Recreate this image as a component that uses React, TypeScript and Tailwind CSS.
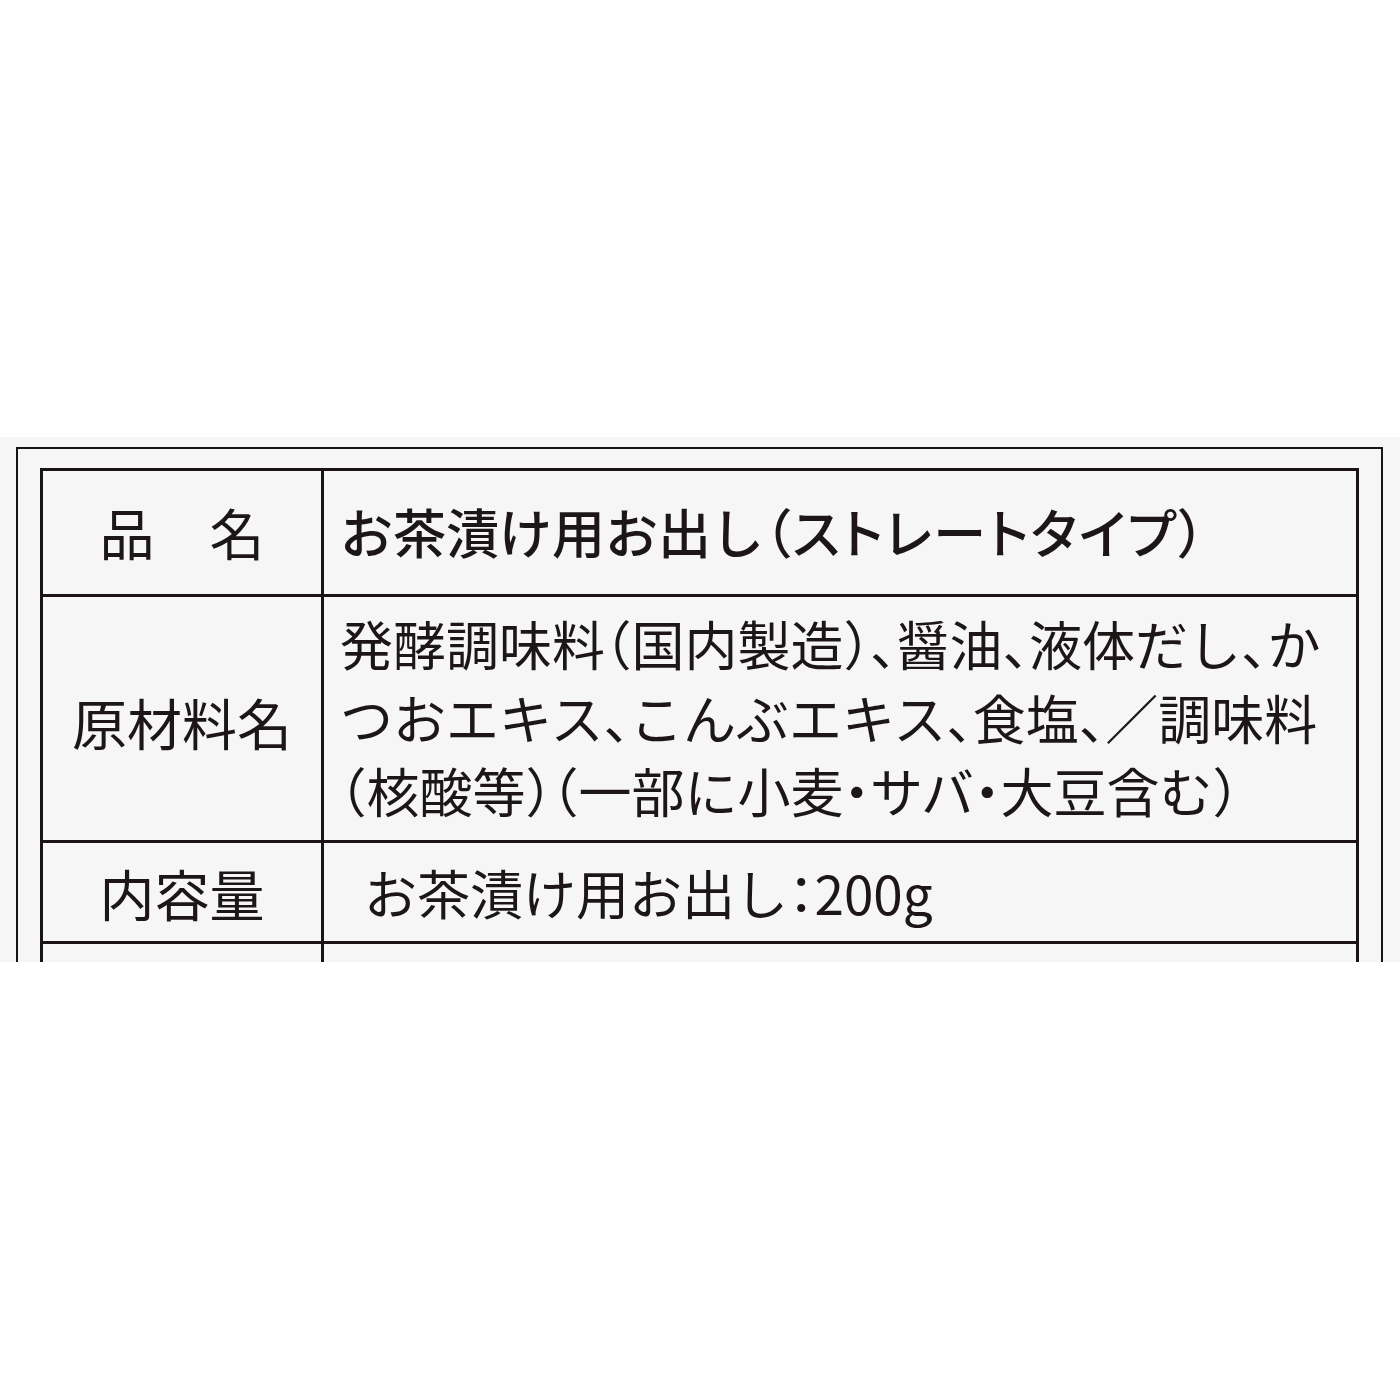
import React from "react";

const font = { fontFamily: '"Noto Sans CJK JP", "Noto Sans", sans-serif' };

export default function App() {
  return (
    <div className="w-[1400px] h-[1400px] bg-white overflow-hidden" style={font}>
      <div className="h-[437px] bg-white" />
      <div className="h-[525px] bg-[#f6f6f6] overflow-hidden">
        <div className="ml-[16px] mt-[10px] w-[1367px] h-[700px] border-2 border-[#1a1414] pt-[19px] px-[22px]">
          <div className="border-[3px] border-[#1a1414] text-[#1c1616]">
            {/* Row 1 */}
            <div className="grid grid-cols-[281px_1fr] border-b-[3px] border-[#1a1414] h-[126px]">
              <div className="border-r-[3px] border-[#1a1414] flex items-center justify-center text-[55px] leading-none pb-[2px]">
                品　名
              </div>
              <div className="flex items-center pl-[16px] text-[53px] leading-none font-medium whitespace-nowrap pb-[2px]">
                お茶漬け用お出し
                <span className="[font-feature-settings:'palt'] tracking-[2px]">（ストレートタイプ）</span>
              </div>
            </div>
            {/* Row 2 */}
            <div className="grid grid-cols-[281px_1fr] border-b-[3px] border-[#1a1414] h-[246px]">
              <div className="border-r-[3px] border-[#1a1414] flex items-center justify-center text-[55px] leading-none pt-[6px]">
                原材料名
              </div>
              <div className="flex flex-col justify-center pl-[16px] text-[53px] leading-[73.5px] whitespace-nowrap [font-feature-settings:'halt'] pb-[2px]">
                <div>発酵調味料（国内製造）、醤油、液体だし、か</div>
                <div>つおエキス、こんぶエキス、食塩、／調味料</div>
                <div>（核酸等）（一部に小麦・サバ・大豆含む）</div>
              </div>
            </div>
            {/* Row 3 */}
            <div className="grid grid-cols-[281px_1fr] border-b-[3px] border-[#1a1414] h-[101px]">
              <div className="border-r-[3px] border-[#1a1414] flex items-center justify-center text-[55px] leading-none">
                内容量
              </div>
              <div className="flex items-center pl-[40px] text-[53px] leading-none whitespace-nowrap [font-feature-settings:'halt']">
                お茶漬け用お出し：200g
              </div>
            </div>
            {/* Row 4 */}
            <div className="grid grid-cols-[281px_1fr] h-[200px]">
              <div className="border-r-[3px] border-[#1a1414]" />
              <div />
            </div>
          </div>
        </div>
      </div>
    </div>
  );
}
